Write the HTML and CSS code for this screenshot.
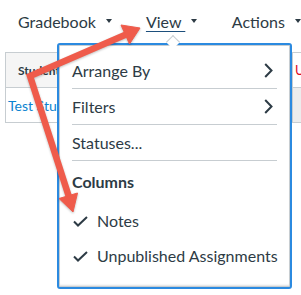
FILE: index.html
```html
<!DOCTYPE html>
<html lang="en">
<head>
    <meta charset="UTF-8">
    <title>Gradebook - View menu</title>
    <link rel="stylesheet" href="styles.css">
</head>
<body>
    <div class="page">
        <div class="topnav">
            <span class="nav-item nav-gradebook">Gradebook <span class="caret"></span></span>
            <span class="nav-item nav-view"><span class="nav-view-label">View </span><span class="caret"></span></span>
            <span class="nav-item nav-actions">Actions <span class="caret"></span></span>
        </div>

        <div class="grid">
            <div class="cell head student-head">Student Name</div>
            <div class="cell head middle-head"></div>
            <div class="cell head assign-head">U</div>
            <div class="cell student-name">Test Student</div>
            <div class="cell middle-cell"></div>
            <div class="cell assign-cell"></div>
        </div>

        <div class="menu">
            <div class="menu-tip"></div>
            <div class="menu-item">Arrange By
                <svg class="chevron" width="9" height="15" viewBox="0 0 9 15"><path d="M1.2 1 L7.5 7.5 L1.2 14" fill="none" stroke="#2d3b45" stroke-width="2"/></svg>
            </div>
            <div class="sep"></div>
            <div class="menu-item">Filters
                <svg class="chevron" width="9" height="15" viewBox="0 0 9 15"><path d="M1.2 1 L7.5 7.5 L1.2 14" fill="none" stroke="#2d3b45" stroke-width="2"/></svg>
            </div>
            <div class="sep"></div>
            <div class="menu-item">Statuses...</div>
            <div class="sep"></div>
            <div class="menu-group">Columns</div>
            <div class="menu-item checked">
                <svg class="check" width="15" height="11" viewBox="0 0 15 11"><path d="M1 5.5 L5 9.5 L14 1" fill="none" stroke="#2d3b45" stroke-width="2"/></svg>
                Notes
            </div>
            <div class="menu-item checked">
                <svg class="check" width="15" height="11" viewBox="0 0 15 11"><path d="M1 5.5 L5 9.5 L14 1" fill="none" stroke="#2d3b45" stroke-width="2"/></svg>
                Unpublished Assignments
            </div>
        </div>

        <!-- annotation arrows -->
        <svg class="arrows" width="301" height="295" viewBox="0 0 301 295">
            <g fill="#ef5b4b" stroke="#ef5b4b">
                <polyline points="126,34.5 30,76 69,197" fill="none" stroke-width="6.5" stroke-linejoin="miter"/>
                <polygon points="140,28 121,25 129.5,44" stroke-width="1"/>
                <polygon points="73,212 59,198.5 77.5,193" stroke-width="1"/>
            </g>
        </svg>
    </div>
</body>
</html>
```

FILE: styles.css
```css
body {
    margin: 0;
    font-family: Lato, "Open Sans", sans-serif;
    color: #2d3b45;
    background: #fff;
}
.page {
    position: relative;
    width: 301px;
    height: 295px;
    overflow: hidden;
}
.topnav {
    display: flex;
    align-items: center;
    height: 42px;
    padding-left: 18px;
    font-size: 16px;
}
.nav-item {
    display: flex;
    align-items: center;
    white-space: pre;
}
.nav-gradebook {
    width: 128px;
}
.nav-view {
    width: 86px;
}
.nav-view-label {
    text-decoration: underline;
    text-decoration-color: #1d4f7c;
    text-underline-offset: 3px;
}
.caret {
    display: inline-block;
    width: 0;
    height: 0;
    margin-left: 6px;
    border-left: 3.5px solid transparent;
    border-right: 3.5px solid transparent;
    border-top: 4px solid #2d3b45;
}
.grid {
    display: grid;
    grid-template-columns: 54px 233px 1fr;
    grid-template-rows: 36px 35px;
    margin: 10px 0 0 5px;
}
.cell {
    display: flex;
    align-items: center;
    border-bottom: 1px solid #c7cdd1;
    white-space: nowrap;
    overflow: hidden;
}
.head {
    border-top: 1px solid #c7cdd1;
}
.student-head {
    background: #f5f5f5;
    border-left: 1px solid #c7cdd1;
    padding-left: 12px;
    font-size: 12px;
    font-weight: bold;
}
.middle-head {
    background: #f5f5f5;
}
.assign-head {
    padding-left: 2px;
    color: #e0061f;
    font-size: 13px;
    border-left: 1px solid #c7cdd1;
}
.student-name {
    border-left: 1px solid #c7cdd1;
    padding-left: 2px;
    color: #0b83d0;
    font-size: 14px;
}
.assign-cell {
    background: #ededed;
    border-left: 1px solid #c7cdd1;
}
.menu {
    position: absolute;
    left: 57px;
    top: 43px;
    width: 231px;
    height: 234px;
    border: 2px solid #2b8ae0;
    border-radius: 3px;
    background: #fff;
    box-shadow: inset 0 0 0 1px #c7cdd1, inset 0 -2px 2px rgba(0, 0, 0, 0.12);
    padding-top: 8px;
    box-sizing: content-box;
    font-size: 16px;
}
.menu-tip {
    position: absolute;
    left: 109px;
    top: -8px;
    width: 9px;
    height: 9px;
    background: #fff;
    border-left: 1px solid #c7cdd1;
    border-top: 1px solid #c7cdd1;
    transform: rotate(45deg);
}
.menu-item {
    display: flex;
    align-items: center;
    height: 35px;
    padding: 0 17px 0 13px;
    white-space: nowrap;
}
.chevron {
    margin-left: auto;
}
.checked {
    padding-right: 4px;
}
.check {
    margin: 1px 9px 0 1px;
    flex-shrink: 0;
}
.sep {
    height: 1px;
    margin: 0 13px;
    background: #c7cdd1;
}
.menu-group {
    display: flex;
    align-items: center;
    height: 42px;
    padding: 0 0 2px 13px;
    box-sizing: border-box;
    font-weight: bold;
}
.arrows {
    position: absolute;
    left: 0;
    top: 0;
    filter: drop-shadow(0 1px 1px rgba(0, 0, 0, 0.25));
}
```
